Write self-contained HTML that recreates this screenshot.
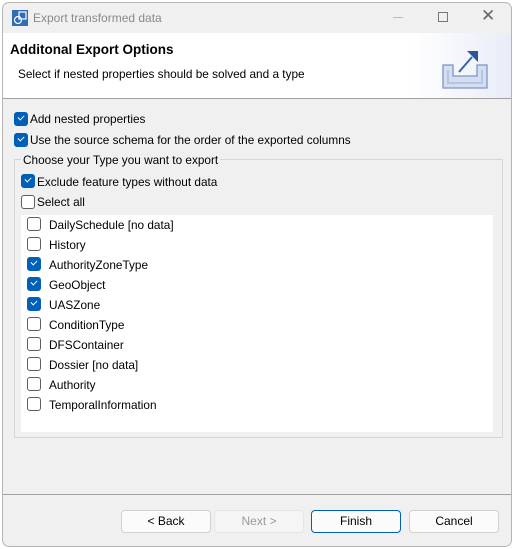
<!DOCTYPE html>
<html><head><style>
*{box-sizing:border-box;margin:0;padding:0}
body{width:514px;height:549px;background:#fff;font-family:"Liberation Sans",sans-serif;font-size:11.8px;color:#000;position:relative;overflow:hidden}
.win{position:absolute;left:2px;top:2px;width:510px;height:545px;background:#f0f0f0;border:1px solid #b5b5b5;border-radius:7px;overflow:hidden}
.t{position:absolute;white-space:nowrap}
.cb{position:absolute;width:14px;height:14px;border-radius:3px}
.on{background:#005fb8;border:1px solid #005fb8}
.on:after{content:"";position:absolute;left:3px;top:2px;width:5px;height:3px;border-left:1.3px solid #fff;border-bottom:1.3px solid #fff;transform:rotate(-45deg)}
.off{background:#fff;border:1px solid #5f5f5f}
.btn{position:absolute;top:509px;height:23px;width:90px;background:#fbfbfb;border:1px solid #d0d0d0;border-radius:4px;text-align:center;line-height:21px;font-size:12px}
</style></head><body>
<div class="win">
 <svg style="position:absolute;left:9px;top:7px" width="16" height="16"><rect width="16" height="16" fill="#2f6db5"/><rect x="7" y="2" width="7" height="7" fill="none" stroke="#fff" stroke-width="1.2"/><circle cx="6" cy="10" r="3.5" fill="none" stroke="#fff" stroke-width="1.2"/></svg>
 <div class="t" style="left:30px;top:8px;color:#8a8a8a;font-size:12px">Export transformed data</div>
 <div style="position:absolute;left:390px;top:14px;width:10px;height:1px;background:#bbb"></div>
 <div style="position:absolute;left:435px;top:9px;width:10px;height:10px;border:1px solid #777"></div>
 <div class="t" style="left:478px;top:3px;font-size:17px;color:#666">✕</div>
 <div style="position:absolute;left:0;top:30px;width:510px;height:66px;background:linear-gradient(90deg,#fff 80%,#e8ecf7);border-bottom:1px solid #a0a0a0"></div>
 <div class="t" style="left:7px;top:39px;font-weight:bold;font-size:13.5px">Additonal Export Options</div>
 <div class="t" style="left:15px;top:64px">Select if nested properties should be solved and a type</div>
 <svg style="position:absolute;left:437px;top:42px" width="54" height="46"><path d="M3 20h10v11h24V20h10v23H3z" fill="#d4def0" stroke="#7a96c4" stroke-width="1.3"/><path d="M8 25v13h34V25" fill="none" stroke="#b6c6e2" stroke-width="2"/><path d="M19 27L32 12" stroke="#3a62a6" stroke-width="2"/><path d="M27 6h11v11z" fill="#2d569a"/></svg>
 <div style="position:absolute;left:508px;top:96px;width:2px;height:449px;background:#e6e6e6"></div>

 <div class="cb on" style="left:11px;top:109px"></div><div class="t" style="left:27px;top:109px">Add nested properties</div>
 <div class="cb on" style="left:11px;top:130px"></div><div class="t" style="left:27px;top:130px">Use the source schema for the order of the exported columns</div>

 <div style="position:absolute;left:11px;top:156px;width:489px;height:279px;border:1px solid #d6d6d6"></div>
 <div class="t" style="left:18px;top:150px;background:#f0f0f0;padding:0 2px">Choose your Type you want to export</div>
 <div class="cb on" style="left:18px;top:171px"></div><div class="t" style="left:34px;top:172px">Exclude feature types without data</div>
 <div class="cb off" style="left:18px;top:192px"></div><div class="t" style="left:34px;top:192px">Select all</div>

 <div style="position:absolute;left:18px;top:212px;width:472px;height:217px;background:#fff"></div>
 <div class="cb off" style="left:24px;top:214px"></div><div class="t" style="left:46px;top:215px">DailySchedule [no data]</div>
 <div class="cb off" style="left:24px;top:234px"></div><div class="t" style="left:46px;top:235px">History</div>
 <div class="cb on" style="left:24px;top:254px"></div><div class="t" style="left:46px;top:255px">AuthorityZoneType</div>
 <div class="cb on" style="left:24px;top:274px"></div><div class="t" style="left:46px;top:275px">GeoObject</div>
 <div class="cb on" style="left:24px;top:294px"></div><div class="t" style="left:46px;top:295px">UASZone</div>
 <div class="cb off" style="left:24px;top:314px"></div><div class="t" style="left:46px;top:315px">ConditionType</div>
 <div class="cb off" style="left:24px;top:334px"></div><div class="t" style="left:46px;top:335px">DFSContainer</div>
 <div class="cb off" style="left:24px;top:354px"></div><div class="t" style="left:46px;top:355px">Dossier [no data]</div>
 <div class="cb off" style="left:24px;top:374px"></div><div class="t" style="left:46px;top:375px">Authority</div>
 <div class="cb off" style="left:24px;top:394px"></div><div class="t" style="left:46px;top:395px">TemporalInformation</div>

 <div style="position:absolute;left:0;top:491px;width:510px;height:1px;background:#a0a0a0"></div>
 <div class="btn" style="left:118px;top:507px">&lt; Back</div>
 <div class="btn" style="left:211px;top:507px;color:#9a9a9a;background:#f5f5f5;border-color:#e5e5e5">Next &gt;</div>
 <div class="btn" style="left:308px;top:507px;border-color:#005fb8">Finish</div>
 <div class="btn" style="left:406px;top:507px">Cancel</div>
</div>
</body></html>
